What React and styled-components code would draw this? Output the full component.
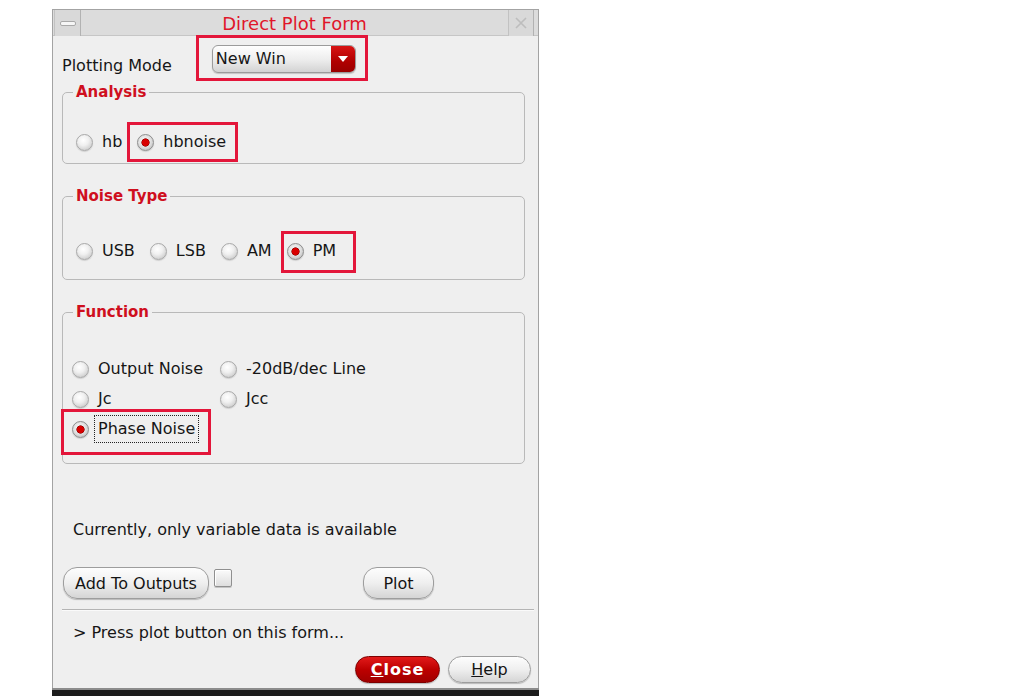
import React from "react";
import styled, { createGlobalStyle } from "styled-components";

const GlobalStyle = createGlobalStyle`
  html, body {
    margin: 0;
    background: #ffffff;
  }
  body {
    font-family: "DejaVu Sans", Verdana, sans-serif;
    color: #161616;
  }
`;

const Window = styled.div`
  margin: 9px 0 0 52px;
  width: 485px;
  border: 1px solid #a3a3a3;
  border-bottom: none;
  background: #efefef;
`;

const TitleBar = styled.div`
  display: grid;
  grid-template-columns: 28px 1fr 30px;
  height: 25px;
  background: #dcdcdc;
  border-bottom: 1px solid #c6c6c6;
`;

const CornerButton = styled.div`
  display: flex;
  align-items: center;
  justify-content: center;
  margin: ${(p) => p.$margin};
  border-left: 1px solid #c2c2c2;
  border-right: 1px solid #b2b2b2;
  background: #d9d9d9;
`;

const MinGlyph = styled.span`
  width: 14px;
  height: 3px;
  border: 1px solid #a9a9a9;
  border-radius: 2px;
  background: #f6f6f6;
`;

const Title = styled.div`
  text-align: center;
  font-size: 18px;
  line-height: 25px;
  padding-top: 1px;
  color: #e0162a;
`;

const Body = styled.div`
  padding: 0 4px 5px 9px;
`;

const PlotRow = styled.div`
  display: flex;
  align-items: flex-start;
  height: 47px;
`;

const Text = styled.div`
  font-size: 16px;
  line-height: 20px;
  margin: ${(p) => p.$margin || "0"};
  padding-left: ${(p) => p.$indent || 0}px;
`;

const Mark = styled.span`
  position: relative;
  display: inline-flex;
  &::after {
    content: "";
    position: absolute;
    inset: ${(p) => p.$inset};
    border: 3px solid #e3163a;
    pointer-events: none;
  }
`;

const Select = styled.div`
  display: flex;
  width: 144px;
  height: 28px;
  box-sizing: border-box;
  border: 1px solid #9b9b9b;
  border-radius: 6px;
  overflow: hidden;
  background: linear-gradient(#fefefe, #ececec 55%, #d3d3d3);
  box-shadow: 0 1px 1px #c4c4c4;
`;

const SelectValue = styled.span`
  flex: 1;
  padding-left: 3px;
  font-size: 16px;
  line-height: 25px;
`;

const SelectArrow = styled.span`
  display: flex;
  align-items: center;
  justify-content: center;
  width: 24px;
  background: linear-gradient(#d81414, #b00000 60%, #9a0000);
`;

const Group = styled.fieldset`
  margin: ${(p) => p.$top}px 9px 0 0;
  padding: 0;
  border: 1px solid #b9b9b9;
  border-radius: 5px;
  min-width: 0;
`;

const Legend = styled.legend`
  margin-left: 10px;
  padding: 0 3px;
  font-size: 15px;
  font-weight: bold;
  line-height: 18px;
  color: #cf0f1e;
`;

const RadioRow = styled.div`
  display: flex;
  align-items: center;
  gap: 15px;
  padding: ${(p) => p.$pad};
`;

const RadioGrid = styled.div`
  display: grid;
  grid-template-columns: 148px auto;
  grid-auto-rows: 30px;
  align-items: center;
  padding: 33px 0 19px 9px;
`;

const Radio = styled.label`
  display: inline-flex;
  align-items: center;
  justify-self: start;
  gap: 9px;
  height: ${(p) => p.$h || 34}px;
  font-size: 16px;
`;

const Dot = styled.span`
  flex: none;
  width: 17px;
  height: 17px;
  box-sizing: border-box;
  border-radius: 50%;
  border: 1px solid ${(p) => (p.$on ? "#8e8e8e" : "#a9a9a9")};
  background: ${(p) =>
    p.$on
      ? "radial-gradient(circle at 50% 50%, #d80000 0 3.2px, #8a0000 3.8px, transparent 4.4px), radial-gradient(circle at 45% 40%, #ffffff, #dcdcdc 55%, #a9a9a9)"
      : "radial-gradient(circle at 42% 35%, #ffffff, #f0f0f0 40%, #d2d2d2 75%, #bdbdbd)"};
  box-shadow: 0 1px 1px #cfcfcf;
`;

const Label = styled.span`
  line-height: 26px;
  ${(p) =>
    p.$focus &&
    `
    margin-left: -4px;
    padding: 0 3px;
    border: 1px dotted #222;
  `}
`;

const ButtonRow = styled.div`
  display: flex;
  align-items: flex-start;
  margin-top: 27px;
  padding-left: 1px;
`;

const Pill = styled.button`
  display: flex;
  align-items: center;
  justify-content: center;
  width: ${(p) => p.$w}px;
  height: ${(p) => p.$h || 32}px;
  margin-left: ${(p) => p.$ml || 0}px;
  padding: 0;
  border-radius: 14px;
  border: 1px solid ${(p) => (p.$red ? "#7e0000" : "#9d9d9d")};
  background: ${(p) =>
    p.$red
      ? "linear-gradient(#e21a1a, #bd0000 50%, #a00000)"
      : "linear-gradient(#fdfdfd, #efefef 50%, #d5d5d5)"};
  box-shadow: 0 1px 1px #b8b8b8;
  font-family: "DejaVu Sans", Verdana, sans-serif;
  font-size: 16px;
  font-weight: ${(p) => (p.$red ? "bold" : "normal")};
  letter-spacing: ${(p) => (p.$red ? "1px" : "0")};
  color: ${(p) => (p.$red ? "#ffffff" : "#141414")};
`;

const Check = styled.span`
  width: 18px;
  height: 18px;
  box-sizing: border-box;
  margin: 2px 0 0 5px;
  border: 1px solid #8f8f8f;
  border-radius: 2px;
  background: linear-gradient(#fbfbfb, #dedede);
  box-shadow: inset 1px 1px 0 #ffffff, 0 1px 0 #c4c4c4;
`;

const Separator = styled.div`
  margin-top: 10px;
  border-top: 1px solid #b4b4b4;
  border-bottom: 1px solid #fafafa;
`;

const Footer = styled.div`
  display: flex;
  justify-content: flex-end;
  gap: 8px;
  margin-top: 13px;
  padding-right: 3px;
`;

const BottomFrame = styled.div`
  height: 2px;
  margin: 0 -1px;
  background: #8c8c8c;
  border-bottom: 6px solid #1c1c1c;
`;

function RadioItem({ label, on, focus, h }) {
  return (
    <Radio $h={h}>
      <Dot $on={on} />
      <Label $focus={focus}>{label}</Label>
    </Radio>
  );
}

export default function App() {
  return (
    <>
      <GlobalStyle />
      <Window>
        <TitleBar>
          <CornerButton $margin="0 0 0 1px">
            <MinGlyph />
          </CornerButton>
          <Title>Direct Plot Form</Title>
          <CornerButton $margin="0 4px 0 0">
            <svg width="14" height="16" viewBox="0 0 14 16">
              <path
                d="M2 3 L7 8 L2 13 M12 3 L7 8 L12 13"
                fill="none"
                stroke="#bdbdbd"
                strokeWidth="1.6"
              />
            </svg>
          </CornerButton>
        </TitleBar>
        <Body>
          <PlotRow>
            <Text $margin="20px 0 0 0">Plotting Mode</Text>
            <Mark $inset="-10px -12px -8px -16px" style={{ marginLeft: 40, marginTop: 9 }}>
              <Select>
                <SelectValue>New Win</SelectValue>
                <SelectArrow>
                  <svg width="10" height="6" viewBox="0 0 10 6">
                    <path d="M0 0 L10 0 L5 6 Z" fill="#ffffff" />
                  </svg>
                </SelectArrow>
              </Select>
            </Mark>
          </PlotRow>

          <Group $top={0}>
            <Legend>Analysis</Legend>
            <RadioRow $pad="24px 0 4px 13px">
              <RadioItem label="hb" />
              <Mark $inset="-3px -12px -3px -10px">
                <RadioItem label="hbnoise" on />
              </Mark>
            </RadioRow>
          </Group>

          <Group $top={23}>
            <Legend>Noise Type</Legend>
            <RadioRow $pad="29px 0 11px 13px">
              <RadioItem label="USB" />
              <RadioItem label="LSB" />
              <RadioItem label="AM" />
              <Mark $inset="-3px -20px -5px -6px">
                <RadioItem label="PM" on />
              </Mark>
            </RadioRow>
          </Group>

          <Group $top={23}>
            <Legend>Function</Legend>
            <RadioGrid>
              <RadioItem label="Output Noise" h={30} />
              <RadioItem label="-20dB/dec Line" h={30} />
              <RadioItem label="Jc" h={30} />
              <RadioItem label="Jcc" h={30} />
              <Mark $inset="-5px -12px -11px -11px" style={{ justifySelf: "start" }}>
                <RadioItem label="Phase Noise" on focus h={30} />
              </Mark>
            </RadioGrid>
          </Group>

          <Text $margin="56px 0 0 0" $indent={11}>
            Currently, only variable data is available
          </Text>

          <ButtonRow>
            <Pill $w={146}>Add To Outputs</Pill>
            <Check />
            <Pill $w={71} $ml={131}>
              Plot
            </Pill>
          </ButtonRow>

          <Separator />

          <Text $margin="12px 0 0 0" $indent={11}>
            &gt; Press plot button on this form...
          </Text>

          <Footer>
            <Pill $w={85} $h={27} $red>
              <u>C</u>lose
            </Pill>
            <Pill $w={83} $h={27}>
              <u>H</u>elp
            </Pill>
          </Footer>
        </Body>
        <BottomFrame />
      </Window>
    </>
  );
}
